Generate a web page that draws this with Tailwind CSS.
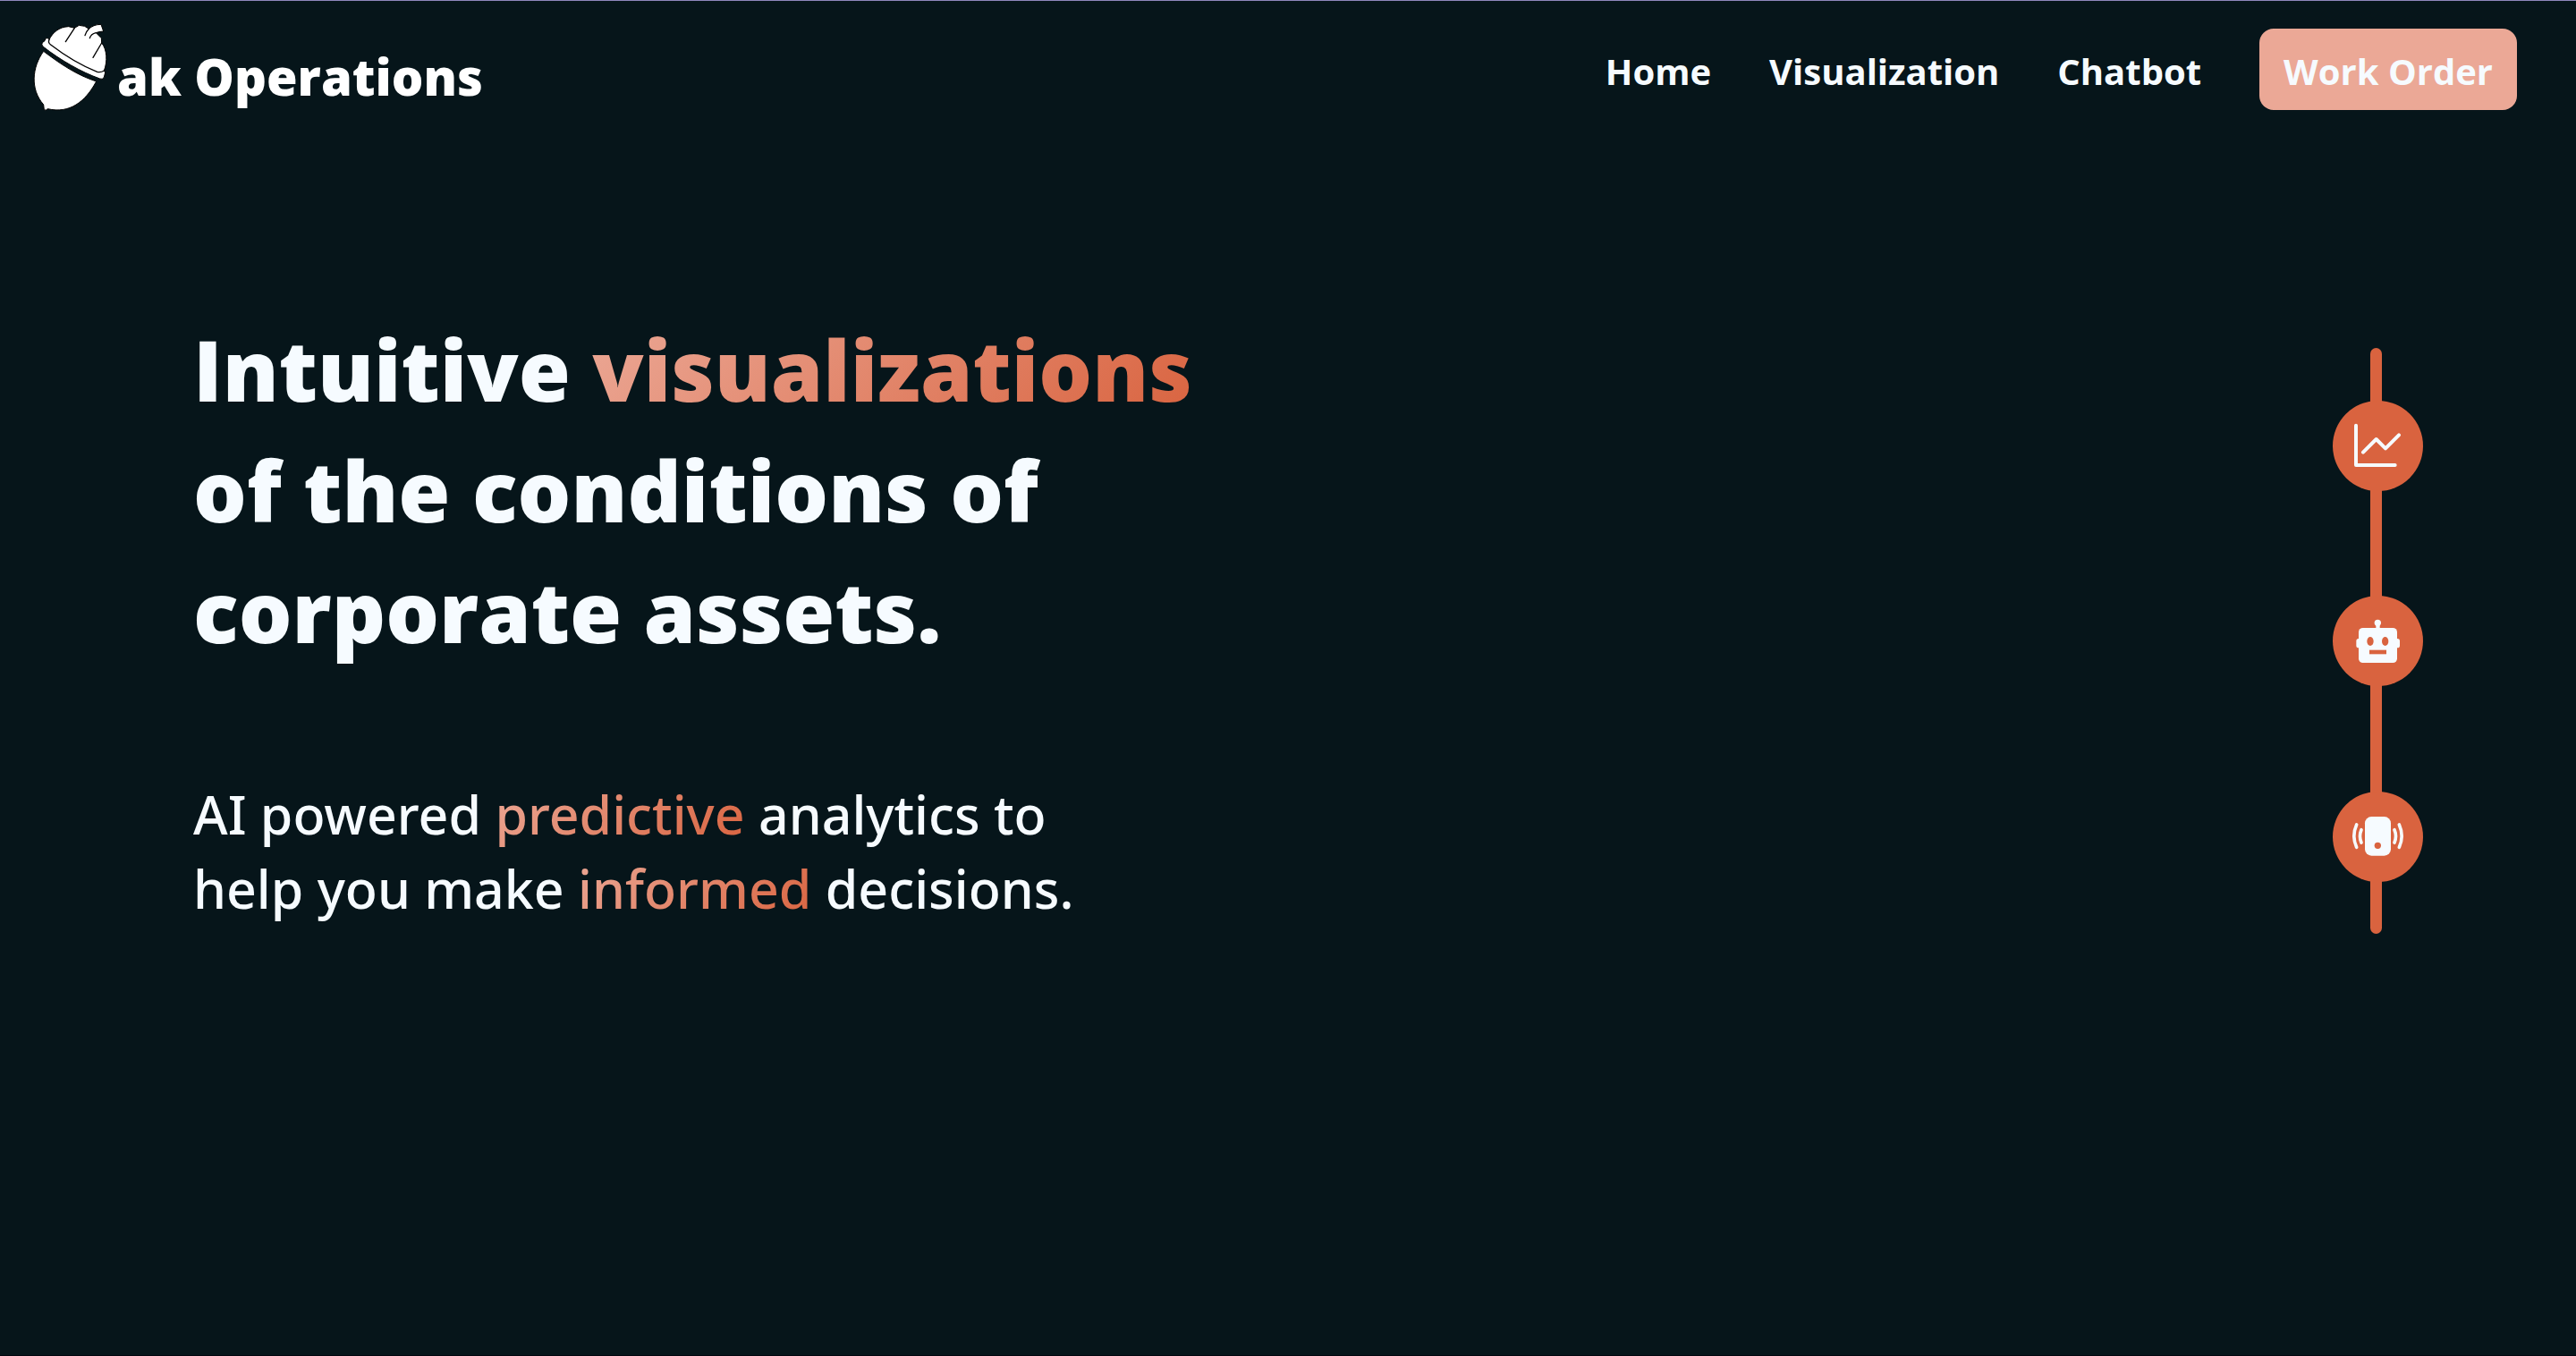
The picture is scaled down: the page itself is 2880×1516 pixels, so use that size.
<!DOCTYPE html>
<html lang="en">
<head>
<meta charset="utf-8">
<meta name="viewport" content="width=device-width, initial-scale=1">
<title>Oak Operations</title>
<script src="https://cdn.jsdelivr.net/npm/@tailwindcss/browser@4"></script>
</head>
<body class="flex min-h-screen flex-col border-t border-b border-t-[#8f87bd] border-b-[#02060f] bg-[#06151a] font-['Open_Sans','Noto_Sans',sans-serif] text-[#f6fbff]">
  <header class="flex items-start justify-between pt-6 pr-[66px] pl-9">
    <a href="#" class="flex items-start gap-[10px] text-white" aria-label="Oak Operations">
      <svg class="h-[100px] w-[85px]" viewBox="50 45 255 300" aria-hidden="true">
        <g fill="#fff" stroke="#000" stroke-width="3" stroke-linejoin="round">
          <path d="M88 142 C50 195 42 268 88 321 L90 338 Q96 342 102 335 C175 352 228 312 265 243 C200 222 145 185 88 142Z"/>
          <path d="M96 98 Q104 96 107 103 C118 80 140 60 172 59 L192 64 L207 55 L226 58 L240 67 C250 58 262 52 281 52 L289 75 Q272 76 264 80 L282 98 L283 114 C301 135 303 177 291 207 L295 213 L291 229 Q286 238 277 234 C215 212 145 172 86 126 Q80 119 84 113 Q94 108 96 98Z"/>
        </g>
        <g fill="none" stroke="#000" stroke-width="4" stroke-linecap="round" stroke-linejoin="round">
          <path d="M107 103 Q102 113 112 120 C155 153 215 190 268 211 Q280 214 291 207"/>
          <path d="M192 64 L162 110M283 114 L254 163M240 67 Q230 77 227 89M264 80 Q247 84 243 98"/>
        </g>
        <path d="M89 134 C145 180 210 216 272 237" fill="none" stroke="#06151a" stroke-width="9"/>
      </svg>
      <span class="pt-[22px] text-[56px]/[76px] font-extrabold">ak Operations</span>
    </a>
    <nav class="flex items-baseline gap-[65px] pt-[7px] text-[40px]/[51px] font-bold">
      <a href="#">Home</a>
      <a href="#">Visualization</a>
      <a href="#">Chatbot</a>
      <button type="button" class="rounded-2xl bg-[#eba896] px-[27px] pt-[22px] pb-[18px]">Work Order</button>
    </nav>
  </header>

  <main class="flex items-start justify-between pt-[221px] pr-[171px] pl-[216px]">
    <section>
      <h1 class="text-[94px]/[135px] font-extrabold">
        Intuitive <span class="bg-linear-[135deg] from-[#eba896] to-[#d9633f] bg-clip-text text-transparent">visualizations</span><br>
        of the conditions of<br>
        corporate assets.
      </h1>
      <p class="mt-[118px] font-['Noto_Sans','Open_Sans',sans-serif] text-[59px]/[83px] font-medium">
        AI powered <span class="bg-linear-[135deg] from-[#eba896] to-[#d9633f] bg-clip-text text-transparent">predictive</span> analytics to<br>
        help you make <span class="bg-linear-[135deg] from-[#eba896] to-[#d9633f] bg-clip-text text-transparent">informed</span> decisions.
      </p>
    </section>

    <div class="mt-[43px] flex w-[101px] flex-col">
      <span class="ml-[42px] h-[62px] w-[13px] rounded-t-full bg-[#d9633f]"></span>
      <a href="#" aria-label="Visualization" class="-my-[3px] rounded-full bg-[#d9633f]">
        <svg class="size-[101px]" viewBox="0 0 303 303" fill="none" stroke="#f6fbff" stroke-width="12" stroke-linecap="round" stroke-linejoin="round">
          <path d="M78 83V216H209M102 173L146 129L177 160L222 115"/>
        </svg>
      </a>
      <span class="ml-[42px] h-[123px] w-[13px] bg-[#d9633f]"></span>
      <a href="#" aria-label="Chatbot" class="-my-[3px] rounded-full bg-[#d9633f]">
        <svg class="size-[101px]" viewBox="0 0 303 303" fill="#f6fbff">
          <circle cx="151" cy="91" r="11"/>
          <path d="M145 98h13v14h-13z"/>
          <rect x="79" y="144" width="146" height="31" rx="8"/>
          <rect x="87" y="108" width="129" height="117" rx="14"/>
          <g fill="#d9633f">
            <ellipse cx="126" cy="153" rx="11" ry="15"/>
            <ellipse cx="176" cy="153" rx="11" ry="15"/>
            <path d="M123 182h57v14h-57z"/>
          </g>
        </svg>
      </a>
      <span class="ml-[42px] h-[124px] w-[13px] bg-[#d9633f]"></span>
      <a href="#" aria-label="Work order" class="-my-[3px] rounded-full bg-[#d9633f]">
        <svg class="size-[101px]" viewBox="0 0 303 303" fill="none" stroke="#f6fbff" stroke-width="11" stroke-linecap="round">
          <rect x="108" y="84" width="87" height="131" rx="22" fill="#f6fbff" stroke="none"/>
          <circle cx="151" cy="181" r="11" fill="#d9633f" stroke="none"/>
          <path d="M96 128Q87 149 96 171M80 111Q63 149 80 187M207 128Q216 149 207 171M223 111Q240 149 223 187"/>
        </svg>
      </a>
      <span class="ml-[42px] h-[61px] w-[13px] rounded-b-full bg-[#d9633f]"></span>
    </div>
  </main>
</body>
</html>
